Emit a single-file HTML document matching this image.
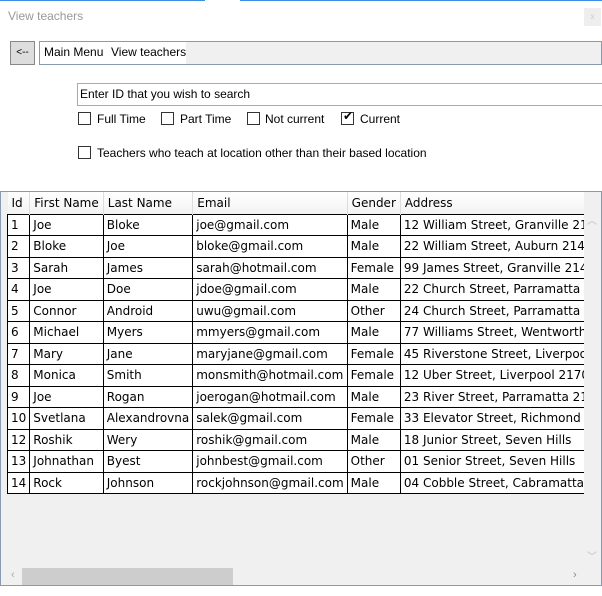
<!DOCTYPE html>
<html><head><style>
*{margin:0;padding:0;box-sizing:border-box}
body{width:602px;height:596px;background:#fff;position:relative;overflow:hidden;font-family:"Liberation Sans",sans-serif;font-size:12px;color:#000}
.a{position:absolute}
.cb{position:absolute;width:13px;height:13px;border:1px solid #333;background:#fff}
.lbl{position:absolute;font-size:12px}
table{border-collapse:collapse;font-family:"DejaVu Sans",sans-serif;font-size:12px}
td{border:1px solid #000;height:21.5px;padding:0 3px;white-space:nowrap;overflow:hidden}
th{font-weight:normal;text-align:left;height:22px;padding:0 4px;background:linear-gradient(#fff,#f3f3f3);border-right:1px solid #ddd;white-space:nowrap}
</style></head><body>
<div class="a" style="left:0;top:0;width:205px;height:1px;background:#3a8ee6"></div>
<div class="a" style="left:240px;top:0;width:362px;height:1px;background:#3a8ee6"></div>
<div class="a" style="left:8px;top:9px;color:#999;font-size:12px">View teachers</div>
<div class="a" style="left:584px;top:8px;width:17px;height:18px;background:#eee;color:#ccc;font-size:8px;text-align:center;line-height:18px">x</div>
<div class="a" style="left:10px;top:41px;width:25px;height:24px;background:#ddd;border:1px solid #888;font-size:10px;text-align:center;line-height:22px">&lt;--</div>
<div class="a" style="left:39px;top:41px;width:563px;height:24px;background:#f0f0f0;border:1px solid #8a9bb0"></div>
<div class="a" style="left:40px;top:42px;width:146px;height:22px;background:#fff"></div>
<div class="a" style="left:44px;top:45px">Main Menu</div>
<div class="a" style="left:111px;top:45px">View teachers</div>
<div class="a" style="left:77px;top:83px;width:530px;height:23px;border:1px solid #aaa;background:#fff"></div>
<div class="a" style="left:80px;top:87px">Enter ID that you wish to search</div>
<div class="cb" style="left:78px;top:112px"></div><div class="lbl" style="left:97px;top:112px">Full Time</div>
<div class="cb" style="left:161px;top:112px"></div><div class="lbl" style="left:180px;top:112px">Part Time</div>
<div class="cb" style="left:247px;top:112px"></div><div class="lbl" style="left:265px;top:112px">Not current</div>
<div class="cb" style="left:341px;top:112px"></div><div class="a" style="left:343px;top:109px;font-size:12px">✔</div><div class="lbl" style="left:360px;top:112px">Current</div>
<div class="cb" style="left:78px;top:146px"></div><div class="lbl" style="left:97px;top:146px">Teachers who teach at location other than their based location</div>
<div class="a" style="left:0;top:191px;width:602px;height:395px;background:#f0f0f0;border:1px solid #8a9bb0;overflow:hidden">
<div class="a" style="left:6px;top:0;width:577px;height:303px;overflow:hidden">
<table style="width:600px">
<tr><th style="width:22px">Id</th><th style="width:75px">First Name</th><th style="width:90px">Last Name</th><th style="width:155px">Email</th><th style="width:53px">Gender</th><th>Address</th></tr>
<tr style="background:#fff"><td>1</td><td>Joe</td><td>Bloke</td><td>joe@gmail.com</td><td>Male</td><td>12 William Street, Granville 2142</td></tr>
<tr style="background:#fff"><td>2</td><td>Bloke</td><td>Joe</td><td>bloke@gmail.com</td><td>Male</td><td>22 William Street, Auburn 2144</td></tr>
<tr style="background:#fff"><td>3</td><td>Sarah</td><td>James</td><td>sarah@hotmail.com</td><td>Female</td><td>99 James Street, Granville 2142</td></tr>
<tr style="background:#fff"><td>4</td><td>Joe</td><td>Doe</td><td>jdoe@gmail.com</td><td>Male</td><td>22 Church Street, Parramatta 2150</td></tr>
<tr style="background:#fff"><td>5</td><td>Connor</td><td>Android</td><td>uwu@gmail.com</td><td>Other</td><td>24 Church Street, Parramatta 2150</td></tr>
<tr style="background:#fff"><td>6</td><td>Michael</td><td>Myers</td><td>mmyers@gmail.com</td><td>Male</td><td>77 Williams Street, Wentworthville</td></tr>
<tr style="background:#fff"><td>7</td><td>Mary</td><td>Jane</td><td>maryjane@gmail.com</td><td>Female</td><td>45 Riverstone Street, Liverpool</td></tr>
<tr style="background:#fff"><td>8</td><td>Monica</td><td>Smith</td><td>monsmith@hotmail.com</td><td>Female</td><td>12 Uber Street, Liverpool 2170</td></tr>
<tr style="background:#fff"><td>9</td><td>Joe</td><td>Rogan</td><td>joerogan@hotmail.com</td><td>Male</td><td>23 River Street, Parramatta 2150</td></tr>
<tr style="background:#fff"><td>10</td><td>Svetlana</td><td>Alexandrovna</td><td>salek@gmail.com</td><td>Female</td><td>33 Elevator Street, Richmond</td></tr>
<tr style="background:#fff"><td>12</td><td>Roshik</td><td>Wery</td><td>roshik@gmail.com</td><td>Male</td><td>18 Junior Street, Seven Hills</td></tr>
<tr style="background:#fff"><td>13</td><td>Johnathan</td><td>Byest</td><td>johnbest@gmail.com</td><td>Other</td><td>01 Senior Street, Seven Hills</td></tr>
<tr style="background:#fff"><td>14</td><td>Rock</td><td>Johnson</td><td>rockjohnson@gmail.com</td><td>Male</td><td>04 Cobble Street, Cabramatta</td></tr>
</table></div>
<div class="a" style="left:583px;top:0;width:17px;height:376px;background:#f0f0f0"></div>
<div class="a" style="left:586px;top:20px;color:#bbb;font-size:10px">︿</div>
<div class="a" style="left:586px;top:356px;color:#bbb;font-size:10px">﹀</div>
<div class="a" style="left:21px;top:376px;width:211px;height:17px;background:#cdcdcd"></div>
<div class="a" style="left:10px;top:377px;color:#aaa;font-size:11px">‹</div>
<div class="a" style="left:572px;top:377px;color:#888;font-size:11px">›</div>
</div>
</body></html>
